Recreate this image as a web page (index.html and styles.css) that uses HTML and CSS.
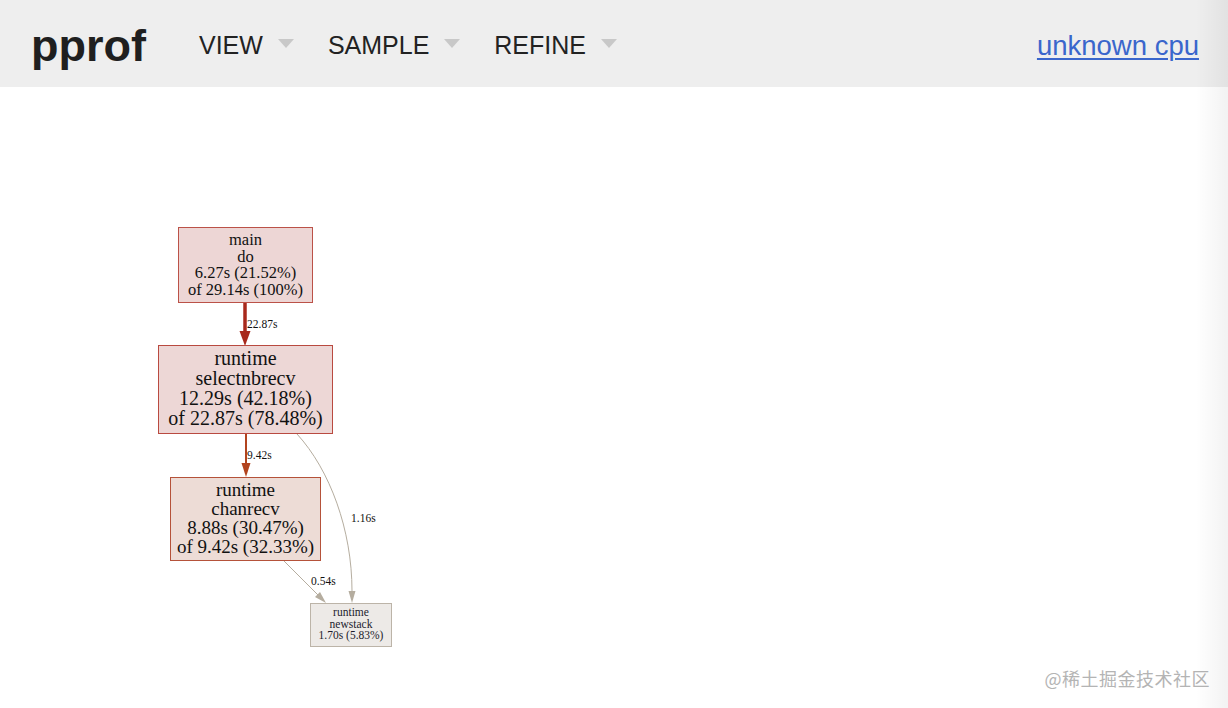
FILE: index.html
```html
<!DOCTYPE html>
<html lang="en">
<head>
    <meta charset="UTF-8">
    <title>unknown cpu</title>
    <link rel="stylesheet" href="styles.css">
</head>
<body>
    <header class="header">
        <div class="logo">pprof</div>
        <nav class="menu">
            <div class="menu-item">VIEW<span class="caret"></span></div>
            <div class="menu-item">SAMPLE<span class="caret"></span></div>
            <div class="menu-item">REFINE<span class="caret"></span></div>
        </nav>
        <a class="title" href="#">unknown cpu</a>
    </header>

    <div class="graph">
        <svg class="graph-svg" width="1228" height="621" viewBox="0 87 1228 621">
            <!-- edges -->
            <g class="edge">
                <path d="M245,302 V332" stroke="#a8291c" stroke-width="3.5" fill="none"/>
                <polygon points="239.5,331 250.5,331 245,346" fill="#a8291c"/>
                <text x="247" y="328">22.87s</text>
            </g>
            <g class="edge">
                <path d="M246,434 V464" stroke="#b2441f" stroke-width="2" fill="none"/>
                <polygon points="241.5,463 250.5,463 246,477" fill="#b2441f"/>
                <text x="247" y="459">9.42s</text>
            </g>
            <g class="edge">
                <path d="M297,434 C330,470 352,530 352,591" stroke="#b5ad9f" stroke-width="1" fill="none"/>
                <polygon points="348.5,591 355.5,591 352,603" fill="#b5ad9f"/>
                <text x="351" y="522">1.16s</text>
            </g>
            <g class="edge">
                <path d="M284,561 L318,595" stroke="#b5ad9f" stroke-width="1" fill="none"/>
                <polygon points="315,597 320,592 326,603" fill="#b5ad9f"/>
                <text x="311" y="585">0.54s</text>
            </g>

            <!-- nodes -->
            <g class="node">
                <rect x="178.5" y="227.5" width="134" height="75" fill="#edd6d5" stroke="#bb5248"/>
                <text x="245.5" y="245" font-size="16.5">main</text>
                <text x="245.5" y="261.5" font-size="16.5">do</text>
                <text x="245.5" y="278" font-size="16.5">6.27s (21.52%)</text>
                <text x="245.5" y="294.5" font-size="16.5">of 29.14s (100%)</text>
            </g>
            <g class="node">
                <rect x="158.5" y="345.5" width="174" height="88" fill="#edd7d6" stroke="#b94a40"/>
                <text x="245.5" y="365" font-size="20">runtime</text>
                <text x="245.5" y="385" font-size="20">selectnbrecv</text>
                <text x="245.5" y="405" font-size="20">12.29s (42.18%)</text>
                <text x="245.5" y="425" font-size="20">of 22.87s (78.48%)</text>
            </g>
            <g class="node">
                <rect x="170.5" y="477.5" width="150" height="83" fill="#eddcd6" stroke="#b5523a"/>
                <text x="245.5" y="495.5" font-size="19">runtime</text>
                <text x="245.5" y="514.5" font-size="19">chanrecv</text>
                <text x="245.5" y="533.5" font-size="19">8.88s (30.47%)</text>
                <text x="245.5" y="552.5" font-size="19">of 9.42s (32.33%)</text>
            </g>
            <g class="node small">
                <rect x="310.5" y="603.5" width="81" height="43" fill="#edeae7" stroke="#bcb4a8"/>
                <text x="351" y="616" font-size="11.5">runtime</text>
                <text x="351" y="627.5" font-size="11.5">newstack</text>
                <text x="351" y="639" font-size="11.5">1.70s (5.83%)</text>
            </g>
        </svg>
    </div>

    <div class="watermark">@稀土掘金技术社区</div>
    <div class="edge-shade"></div>
</body>
</html>
```

FILE: styles.css
```css
html, body {
    margin: 0;
    padding: 0;
    height: 100%;
    overflow: hidden;
    background: #fff;
}

body {
    font-family: "Liberation Sans", Arial, sans-serif;
    position: relative;
}

.header {
    display: flex;
    align-items: center;
    height: 87px;
    box-sizing: border-box;
    padding: 4px 29px 0 31px;
    background: #eeeeee;
    color: #222;
}

.logo {
    font-size: 45px;
    font-weight: bold;
    color: #1f1f1f;
}

.menu {
    display: flex;
    align-items: center;
    gap: 34px;
    margin-left: 53px;
}

.menu-item {
    display: flex;
    align-items: center;
    font-size: 25px;
    color: #222;
}

.caret {
    width: 0;
    height: 0;
    margin-left: 15px;
    margin-top: -4px;
    border-left: 8.5px solid transparent;
    border-right: 8.5px solid transparent;
    border-top: 9px solid #c8c8c8;
}

.title {
    margin-left: auto;
    font-size: 27.5px;
    color: #3a66cc;
    text-decoration: underline;
    text-underline-offset: 3px;
    text-decoration-thickness: 2px;
}

.graph {
    height: 621px;
}

.graph-svg {
    display: block;
}

.graph-svg text {
    font-family: "Liberation Serif", "Times New Roman", serif;
    fill: #111;
}

.node text {
    text-anchor: middle;
}

.node.small text {
    fill: #1c1c2c;
}

.edge text {
    font-size: 11.5px;
}

.watermark {
    position: absolute;
    right: 18px;
    bottom: 17px;
    font-family: "Noto Sans CJK SC", sans-serif;
    font-size: 18px;
    letter-spacing: 0.5px;
    color: #b4b4b4;
}

.edge-shade {
    position: absolute;
    top: 0;
    right: 0;
    width: 32px;
    height: 100%;
    background: linear-gradient(to right, rgba(0, 0, 0, 0), rgba(0, 0, 0, 0.05));
    pointer-events: none;
}
```
